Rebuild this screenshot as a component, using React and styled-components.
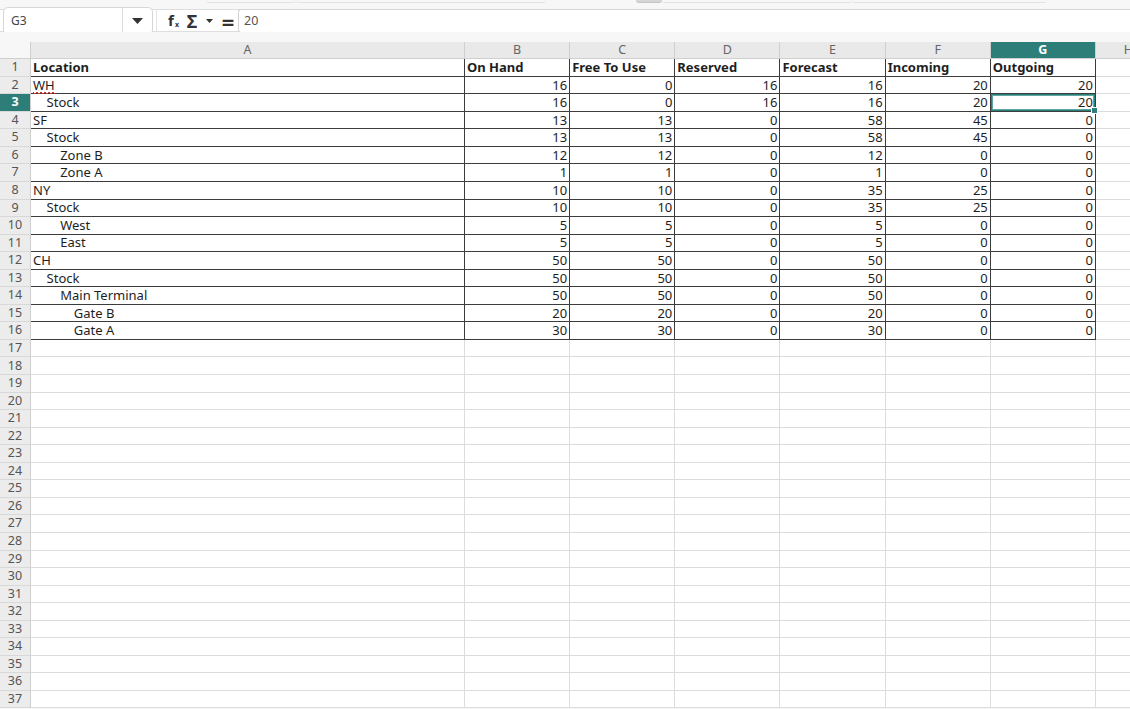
import React from 'react';
import styled, { createGlobalStyle, css } from 'styled-components';

const GlobalStyle = createGlobalStyle`
  html, body {
    margin: 0;
    padding: 0;
    background: #ffffff;
    overflow: hidden;
  }
  body {
    font-family: "Noto Sans", "Open Sans", sans-serif;
    color: #222;
  }
`;

const ROW_H = 17.56;
const COL_W = 105.17;
const TEAL = '#2d7e79';

const Page = styled.div`
  width: 1130px;
  height: 709px;
  display: flex;
  flex-direction: column;
  background: #f7f7f7;
  overflow: hidden;
`;

const TabStrip = styled.div`
  height: 9px;
  display: flex;
  align-items: flex-start;
  padding-left: 200px;
  background: #f7f7f7;
`;

const TabEdge = styled.div`
  height: 2px;
  width: ${p => p.w}px;
  margin-left: ${p => p.ml}px;
  border-bottom: 1px solid ${p => (p.dark ? '#c4c4c4' : '#e2e2e2')};
  border-radius: 0 0 4px 4px;
  background: ${p => (p.dark ? '#d6d6d6' : 'transparent')};
`;

const FormulaBar = styled.div`
  height: 21px;
  display: flex;
  align-items: center;
  background: #fff;
  border-top: 1px solid #dedede;
  border-bottom: 1px solid #dedede;
`;

const NameBox = styled.div`
  margin-left: 3px;
  width: 150px;
  height: 28px;
  box-sizing: border-box;
  display: flex;
  border: 1px solid #d6d6d6;
  border-radius: 5px;
  background: #fff;
`;

const NameText = styled.div`
  flex: 1;
  display: flex;
  align-items: center;
  padding-left: 7px;
  font-size: 12px;
  color: #444;
`;

const NameDrop = styled.div`
  width: 29px;
  border-left: 1px solid #dcdcdc;
  display: flex;
  align-items: center;
  justify-content: center;
`;

const Tools = styled.div`
  display: flex;
  align-items: center;
  margin-left: 3px;
  height: 100%;
  border-left: 1px solid #e4e4e4;
  padding-left: 10px;
`;

const ToolGlyph = styled.span`
  display: inline-flex;
  align-items: center;
  justify-content: center;
  color: #333;
  font-weight: 700;
  width: ${p => p.w}px;
  font-size: ${p => p.size || 14}px;
  line-height: 1;
`;

const Input = styled.div`
  margin-left: 1px;
  flex: 1;
  height: 24px;
  box-sizing: border-box;
  border: 1px solid #d4d4d4;
  border-right: none;
  border-radius: 3px 0 0 3px;
  display: flex;
  align-items: center;
  padding-left: 5px;
  font-size: 12.5px;
  color: #555;
  background: #fff;
`;

const Gap = styled.div`
  height: 10px;
  background: #f7f7f7;
`;

const Grid = styled.div`
  display: grid;
  grid-template-columns: 31px 434px repeat(6, ${COL_W}px) 40px;
  grid-template-rows: 17.2px repeat(37, ${ROW_H}px);
  background: #fff;
  font-size: 13px;
`;

const Corner = styled.div`
  background: #f7f7f7;
  border-right: 1px solid #cfcfcf;
  border-bottom: 1px solid #cfcfcf;
  box-sizing: border-box;
`;

const ColHead = styled.div`
  box-sizing: border-box;
  display: flex;
  align-items: center;
  justify-content: ${p => (p.clip ? 'flex-end' : 'center')};
  padding-right: ${p => (p.clip ? '2px' : 0)};
  overflow: hidden;
  background: ${p => (p.active ? TEAL : '#e9e9e9')};
  color: ${p => (p.active ? '#fff' : '#666')};
  font-weight: ${p => (p.active ? 700 : 400)};
  border-right: 1px solid #cfcfcf;
  border-bottom: 1px solid #cfcfcf;
  font-size: 12.5px;
  line-height: 1;
`;

const RowHead = styled.div`
  box-sizing: border-box;
  display: flex;
  align-items: center;
  justify-content: center;
  background: ${p => (p.active ? TEAL : '#ececec')};
  color: ${p => (p.active ? '#fff' : '#555')};
  font-weight: ${p => (p.active ? 700 : 400)};
  border-right: 1px solid #cfcfcf;
  border-bottom: 1px solid #d8d8d8;
  font-size: 12.5px;
  line-height: 1;
`;

const Cell = styled.div`
  position: relative;
  box-sizing: border-box;
  display: flex;
  align-items: center;
  justify-content: ${p => (p.num ? 'flex-end' : 'flex-start')};
  padding: 0 2px 0 ${p => 2 + p.indent * 13.6}px;
  white-space: nowrap;
  line-height: 1;
  color: #1e1e1e;
  font-weight: ${p => (p.bold ? 700 : 400)};
  border-right: 1px solid #dcdcdc;
  border-bottom: 1px solid #dcdcdc;
  ${p =>
    p.data &&
    css`
      border-right-color: #3c3c3c;
      border-bottom-color: #3c3c3c;
    `}
  ${p =>
    p.selected &&
    css`
      box-shadow: inset 0 0 0 1px ${TEAL}, inset 0 0 0 2px #5da7a2;
    `}
`;

const SpellWord = styled.span`
  position: relative;
  display: inline-block;
  line-height: 1;
  &::after {
    content: '';
    position: absolute;
    left: 0;
    right: 0;
    bottom: -3px;
    height: 3px;
    background:
      radial-gradient(circle at 50% 0, transparent 1px, #d33 1.2px, #d33 1.8px, transparent 2px) 0 0 / 4px 3px repeat-x;
  }
`;

const Handle = styled.span`
  position: absolute;
  right: -3px;
  bottom: -3px;
  width: 5px;
  height: 5px;
  background: ${TEAL};
  border: 1px solid #fff;
  z-index: 2;
`;

const header = ['Location', 'On Hand', 'Free To Use', 'Reserved', 'Forecast', 'Incoming', 'Outgoing'];

const rows = [
  ['WH', 0, 16, 0, 16, 16, 20, 20],
  ['Stock', 1, 16, 0, 16, 16, 20, 20],
  ['SF', 0, 13, 13, 0, 58, 45, 0],
  ['Stock', 1, 13, 13, 0, 58, 45, 0],
  ['Zone B', 2, 12, 12, 0, 12, 0, 0],
  ['Zone A', 2, 1, 1, 0, 1, 0, 0],
  ['NY', 0, 10, 10, 0, 35, 25, 0],
  ['Stock', 1, 10, 10, 0, 35, 25, 0],
  ['West', 2, 5, 5, 0, 5, 0, 0],
  ['East', 2, 5, 5, 0, 5, 0, 0],
  ['CH', 0, 50, 50, 0, 50, 0, 0],
  ['Stock', 1, 50, 50, 0, 50, 0, 0],
  ['Main Terminal', 2, 50, 50, 0, 50, 0, 0],
  ['Gate B', 3, 20, 20, 0, 20, 0, 0],
  ['Gate A', 3, 30, 30, 0, 30, 0, 0],
];

const letters = ['A', 'B', 'C', 'D', 'E', 'F', 'G', 'H'];

function FxIcon() {
  return (
    <svg width="18" height="18" viewBox="0 0 18 18">
      <text x="1" y="14" fontSize="15" fontWeight="700" fill="#333" fontFamily="Noto Sans, sans-serif">f</text>
      <text x="8" y="15" fontSize="7" fill="#333" fontFamily="Noto Sans, sans-serif">x</text>
    </svg>
  );
}

function Caret({ w = 10, h = 5 }) {
  return (
    <svg width={w} height={h} viewBox={`0 0 ${w} ${h}`}>
      <polygon points={`0,0 ${w},0 ${w / 2},${h}`} fill="#333" />
    </svg>
  );
}

function Toolbar() {
  return (
    <FormulaBar>
      <NameBox>
        <NameText>G3</NameText>
        <NameDrop>
          <Caret w={11} h={6} />
        </NameDrop>
      </NameBox>
      <Tools>
        <ToolGlyph w={18}><FxIcon /></ToolGlyph>
        <ToolGlyph w={14} size={18}>Σ</ToolGlyph>
        <ToolGlyph w={20}><Caret w={7} h={4} /></ToolGlyph>
        <ToolGlyph w={18} size={22}>=</ToolGlyph>
      </Tools>
      <Input>20</Input>
    </FormulaBar>
  );
}

function Sheet() {
  const cells = [];
  cells.push(<Corner key="corner" />);
  letters.forEach(l => {
    cells.push(
      <ColHead key={'h' + l} active={l === 'G'} clip={l === 'H'}>
        {l}
      </ColHead>
    );
  });

  for (let r = 1; r <= 37; r++) {
    cells.push(
      <RowHead key={'r' + r} active={r === 3}>
        {r}
      </RowHead>
    );
    for (let c = 0; c < 8; c++) {
      const inData = r <= 16 && c < 7;
      let content = null;
      let indent = 0;
      let num = false;
      let bold = false;
      if (r === 1 && c < 7) {
        content = header[c];
        bold = true;
      } else if (r >= 2 && r <= 16 && c < 7) {
        const row = rows[r - 2];
        if (c === 0) {
          content = row[0] === 'WH' ? <SpellWord>WH</SpellWord> : row[0];
          indent = row[1];
        } else {
          content = row[c + 1];
          num = true;
        }
      }
      const selected = r === 3 && c === 6;
      cells.push(
        <Cell
          key={`c${r}-${c}`}
          data={inData}
          indent={indent}
          num={num}
          bold={bold}
          selected={selected}
        >
          {content}
          {selected && <Handle />}
        </Cell>
      );
    }
  }
  return <Grid>{cells}</Grid>;
}

export default function App() {
  return (
    <>
      <GlobalStyle />
      <Page>
        <TabStrip>
          <TabEdge w={90} ml={6} />
          <TabEdge w={250} ml={0} />
          <TabEdge w={26} ml={90} dark />
          <TabEdge w={190} ml={0} />
          <TabEdge w={195} ml={0} />
        </TabStrip>
        <Toolbar />
        <Gap />
        <Sheet />
      </Page>
    </>
  );
}
